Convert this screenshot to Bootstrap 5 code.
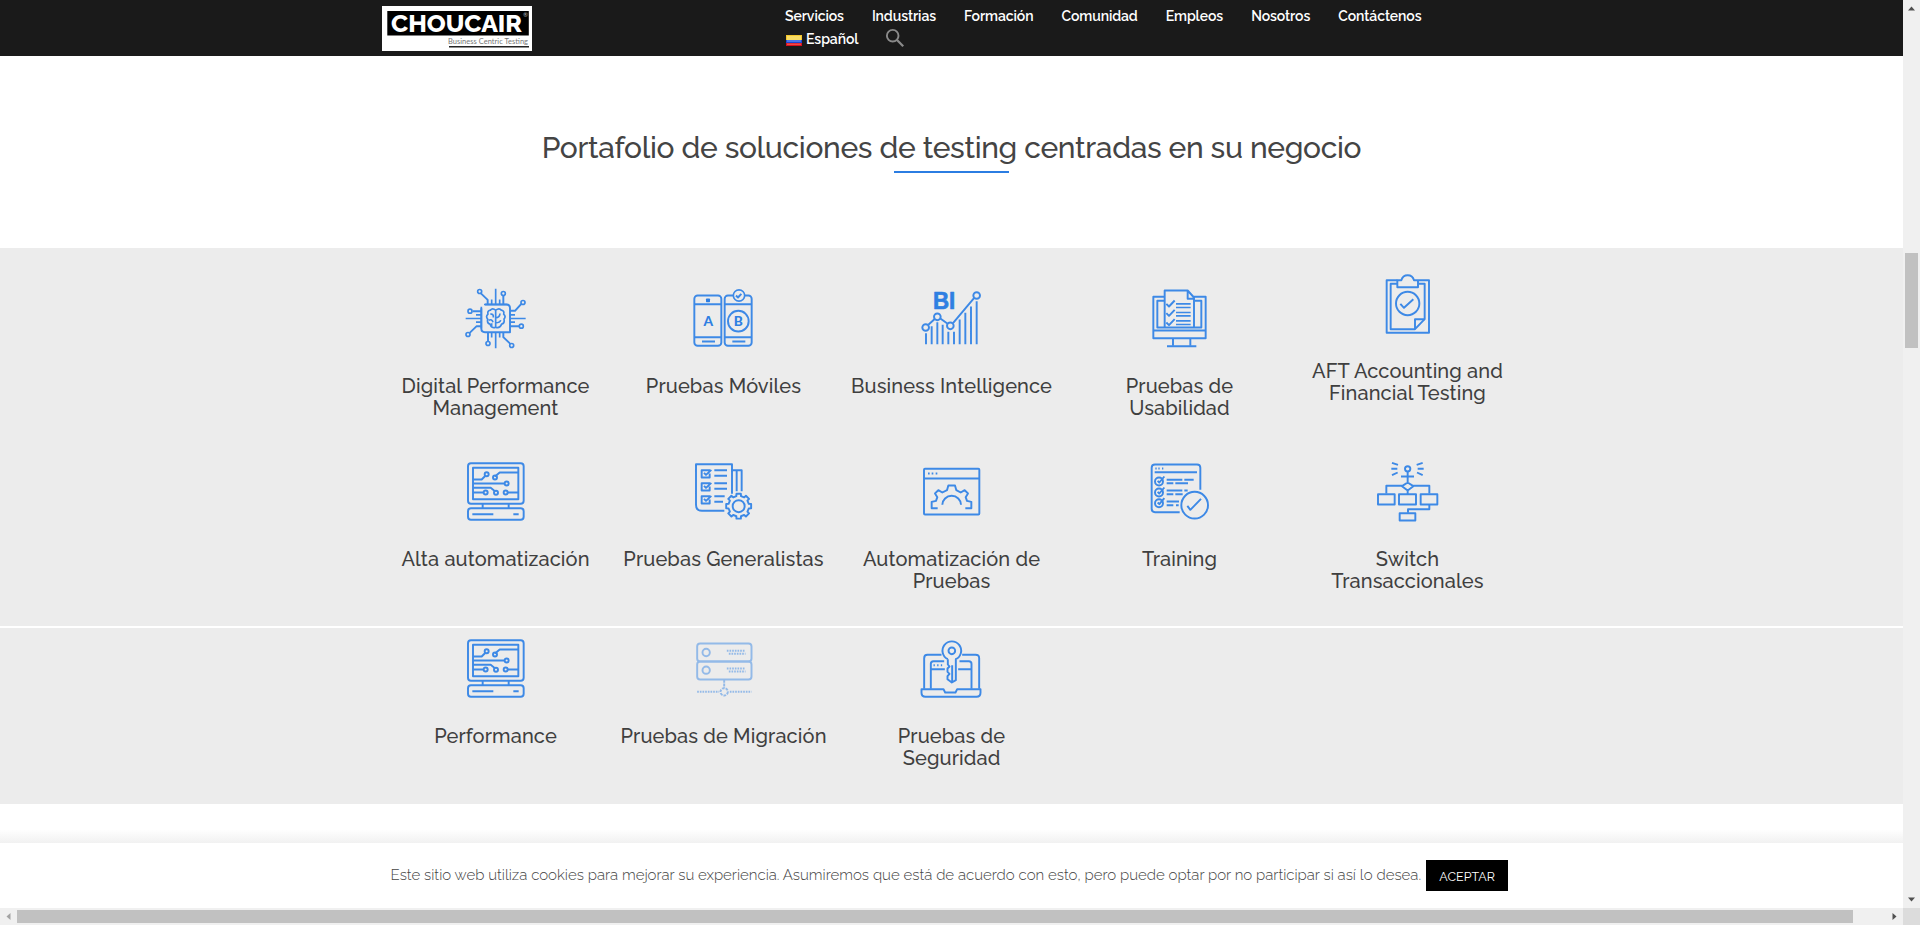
<!DOCTYPE html>
<html lang="es">
<head>
<meta charset="utf-8">
<meta name="viewport" content="width=device-width, initial-scale=1">
<title>Choucair Testing</title>
<link href="https://cdn.jsdelivr.net/npm/bootstrap@5.3.0/dist/css/bootstrap.min.css" rel="stylesheet">
<style>
body{font-family:Raleway,Lato,"Open Sans",sans-serif;color:#3f3f3f;height:925px;overflow:hidden;background:#fff}
.viewport-row{height:908px}
.site-head{height:56px;background:#1a1a1a}
.wrap{width:1140px}
.logo{width:150px;height:45px;margin:6px 0 0 .5px}
.site-nav{width:680px;margin-left:253px;padding-top:5px}
.site-nav a{color:#fff;font-size:14px;font-weight:600;line-height:23px;height:23px;white-space:nowrap;text-decoration:none;letter-spacing:-.085px}
.menu-line{column-gap:28px}
.title-block{height:192px;padding-top:73px}
.title-block h2{font-size:30px;font-weight:500;line-height:38px;margin:0;color:#444;white-space:nowrap;letter-spacing:-.325px}
.rule{width:115px;height:2px;background:#2b7de2;margin-top:4px}
.services{background:#ececec}
.band-a{height:378px;padding-top:39px}
.band-b{height:176px;padding-top:9px}
.divider{height:2px;background:#fff}
.svc-row{height:173px}
.svc{width:228px;text-align:center}
.svc svg{width:64px;height:64px;display:block;margin:0 auto 24px;fill:none;stroke:#3d89e6;stroke-width:5.8;stroke-linejoin:round;transform:translate(-.5px,-.5px)}
.svc h4{font-size:20px;font-weight:500;line-height:22px;margin:0;white-space:nowrap;letter-spacing:.12px}
.svc.raised{margin-top:-15px}
.svc .solid{fill:#2f7fe2;stroke:none}
.gap-strip{height:39px;background:linear-gradient(#fff 65%,#f1f1f1)}
.cookie{height:65px;background:#fff;padding-left:18px}
.cookie-text{font-size:15px;font-weight:300;color:#444;white-space:nowrap}
.accept{width:82px;height:31px;background:#000;color:#fff;font-size:12.5px;border-radius:0;margin-left:5px;padding:0;line-height:31px;text-align:center;white-space:nowrap}
.bar-v{width:17px;background:#f0f0f0}
.bar-v .thumb{width:13px;height:95px;background:#c1c1c1;margin-top:236px}
.bar-h{height:17px;background:#f0f0f0}
.bar-h .thumb{width:1836px;height:13px;background:#c1c1c1}
.bar-end{width:17px;height:17px;flex:none}
.corner{width:17px;height:17px;background:#dcdcdc}
</style>
</head>
<body>
<div class="d-flex viewport-row">
<main class="flex-grow-1">
  <header class="site-head">
    <div class="wrap mx-auto d-flex">
      <svg class="logo flex-shrink-0" viewBox="0 0 150 45">
        <rect width="150" height="45" fill="#fff"/><rect x="5.3" y="5" width="141.500" height="24.500"/>
        <text x="9" y="26" font-family="Raleway" font-weight="800" font-size="24" fill="#fff" textLength="131" lengthAdjust="spacingAndGlyphs">CHOUCAIR</text>
        <text x="141" y="11" font-family="Lato" font-size="6" fill="#bbb">®</text>
        <text x="66" y="37.500" font-family="Lato" font-size="7.500" fill="#777" textLength="80" lengthAdjust="spacing">Business Centric Testing</text>
        <path d="M67 40.800H147" stroke="#222" stroke-width="1.500"/>
      </svg>
      <nav class="site-nav">
        <div class="d-flex menu-line">
          <a href="#">Servicios</a><a href="#">Industrias</a><a href="#">Formación</a><a href="#">Comunidad</a><a href="#">Empleos</a><a href="#">Nosotros</a><a href="#">Contáctenos</a>
        </div>
        <div class="d-flex">
          <a href="#" class="d-flex"><svg width="16" height="11" style="margin:7px 4px 0 1px" viewBox="0 0 16 11"><rect width="16" height="11" fill="#f3c52b"/><rect y="1" x="1" width="14" height="4" fill="#f8dc65"/><rect y="5" width="16" height="3" fill="#1e47d0"/><rect y="5" x="1" width="14" height="2" fill="#4b73e8"/><rect y="8" width="16" height="3" fill="#d8101c"/><rect y="8.500" x="1" width="14" height="1.500" fill="#f04a4a"/></svg>Español</a>
          <svg width="20" height="20" viewBox="0 0 20 20" fill="none" stroke="#8a8a8a" stroke-width="1.900" style="margin-left:27px"><circle cx="7.700" cy="7.700" r="5.800"/><path d="M12 12l6.200 6.200" stroke-width="2.300"/></svg>
        </div>
      </nav>
    </div>
  </header>

  <section class="title-block text-center">
    <h2>Portafolio de soluciones de testing centradas en su negocio</h2>
    <div class="rule mx-auto"></div>
  </section>

  <section class="services">
    <div class="band-a">
      <div class="wrap mx-auto d-flex svc-row">
        <div class="svc">
          <svg viewBox="250.5 51 192 192">
            <path d="M315 105H379Q390 105 390 116V188H315Q304 188 304 177V116"/><path d="M304 112V177M312 105h70M347 58v47M347 188v48M257 147h47M390 147h47M335 90v15M359 90v15M335 188v16M359 188v16M288 136h16M288 158h16M390 136h15M390 158h15" stroke-width="5"/>
            <path d="M302 71l21 20v14M370 79v26M424 103l-19 21h-15M304 125h-26M304 170h-14l-21 20M390 170h28M324 188v28M370 188v15l21 20"/>
            <g stroke-width="5"><circle cx="299" cy="66" r="6"/><circle cx="370" cy="72" r="6"/><circle cx="429" cy="99" r="6"/><circle cx="270" cy="125" r="6"/><circle cx="264" cy="195" r="6"/><circle cx="424" cy="170" r="6"/><circle cx="324" cy="222" r="6"/><circle cx="395" cy="228" r="6"/></g>
            <path d="M347 122q-10-8-16 0-10 2-7 12-8 7-1 15-3 12 7 15 5 14 17 9V122q11-8 17 0 10 2 7 12 8 7 1 15 3 12-7 15-6 14-18 9M331 134q10-2 9 10M326 152q10-4 13 6M347 145q12-1 13-13M347 160q13 0 15-8M335 170v-9" stroke-width="5"/>
          </svg>
          <h4>Digital Performance<br>Management</h4>
        </div>
        <div class="svc">
          <svg viewBox="934.5 51 192 192">
            <rect x="943" y="78" width="81" height="151" rx="10"/><rect x="1034" y="78" width="81" height="151" rx="10"/><path d="M943 104h81M1034 104h81M943 203h81M1034 203h81M966 216h39M1057 216h39"/>
            <circle cx="1077" cy="78" r="17" fill="#ececec" stroke-width="5"/><path d="M1068 78l6 6 10-11"/><circle cx="1075" cy="155" r="31"/>
            <rect x="978" y="87" width="12" height="11" rx="2" class="solid"/>
            <text x="985" y="169" text-anchor="middle" font-family="Lato" font-weight="900" font-size="41" class="solid">A</text><text x="1075" y="169" text-anchor="middle" font-family="Lato" font-weight="900" font-size="41" class="solid">B</text>
          </svg>
          <h4>Pruebas Móviles</h4>
        </div>
        <div class="svc">
          <svg viewBox="238.5 51 192 192">
            <path d="M258 191v33M275 170v54M292 158v66M308 166v58M325 187v37M342 187v37M359 150v74M376 130v94M393 111v113M410 95v129"/><path d="M265 166l20-18M301 147l22 16M339 161l63-75"/>
            <circle cx="257" cy="174" r="10"/><circle cx="292" cy="142" r="10"/><circle cx="331" cy="169" r="10"/><circle cx="410" cy="78" r="10"/>
            <text x="279" y="119" font-family="Liberation Sans" font-weight="700" font-size="70" textLength="67" lengthAdjust="spacingAndGlyphs" fill="#2f7fe2" stroke="#2f7fe2" stroke-width="2">BI</text>
          </svg>
          <h4>Business Intelligence</h4>
        </div>
        <div class="svc">
          <svg viewBox="922.5 51 192 192">
            <path d="M974 82H940V206H1097V82H1062M940 183H1097M974 94H952V174H1084V94H1064M999 206v23M1051 206v23"/><path d="M981 230h88"/><path d="M974 174V63H1043L1062 84V174M1043 63V88H1062"/><path d="M979 103l8 8 17-18M979 131l8 8 17-18M979 159l8 8 17-18"/><path d="M1008 103h44M1008 114h44M1008 129h44M1008 139h44M1008 154h44M1008 165h44" stroke-width="5"/>
          </svg>
          <h4>Pruebas de<br>Usabilidad</h4>
        </div>
        <div class="svc raised">
          <svg viewBox="466.5 66 192 192">
            <path d="M532 92H500V250H627V92H595M532 103H512V239H585L614 209V103H595"/><path d="M585 239V209H614"/><path d="M532 92H544Q548 77 563 77T582 92H594V113H532Z"/><circle cx="563" cy="162" r="35"/><path d="M541 163l11 12 28-26"/>
          </svg>
          <h4>AFT Accounting and<br>Financial Testing</h4>
        </div>
      </div>

      <div class="wrap mx-auto d-flex">
        <div class="svc">
          <svg viewBox="250.5 30 192 192">
            <g id="circuit-pc"><rect x="264" y="41" width="167" height="122" rx="9"/><rect x="279" y="55" width="136" height="94"/><rect x="264" y="176" width="167" height="35" rx="9"/><path d="M308 163v13M386 163v13M277 194h63M400 194h16M279 90h26l12-12M279 102h94M279 115h53l13 10M279 129h32M345 81l14-12h56M383 129h32"/><circle cx="320" cy="74" r="6"/><circle cx="345" cy="84" r="6"/><circle cx="380" cy="102" r="6"/><circle cx="317" cy="129" r="6"/><circle cx="348" cy="130" r="6"/><circle cx="377" cy="129" r="6"/></g>
          </svg>
          <h4>Alta automatización</h4>
        </div>
        <div class="svc">
          <svg viewBox="934.5 30 192 192">
            <path d="M1033 184H966Q948 184 948 166V44H1056V133M1056 62H1085V125M1070 62V125"/><path d="M990 62H965V84H989V72M990 101H965V123H989V111M990 140H965V162H989V150M972 70l6 6 16-15M972 109l6 6 16-15M972 148l6 6 16-15"/><path d="M1003 62h38M1003 79h38M1003 101h38M1003 118h38M1003 140h31M1003 157h26"/>
            <g transform="translate(1076 170)"><path d="M30.2-7 37.4-6.6V6.6L30.2 7 26.3 16.4 31.1 21.8 21.8 31.1 16.4 26.3 7 30.2 6.6 37.4H-6.6L-7 30.2-16.4 26.3-21.8 31.1-31.1 21.8-26.3 16.4-30.2 7-37.4 6.6V-6.6L-30.2-7-26.3-16.4-31.1-21.8-21.8-31.1-16.4-26.3-7-30.2-6.6-37.4H6.6L7-30.2 16.4-26.3 21.8-31.1 31.1-21.8 26.3-16.4Z"/><circle r="18"/></g>
          </svg>
          <h4>Pruebas Generalistas</h4>
        </div>
        <div class="svc">
          <svg viewBox="238.5 30 192 192">
            <rect x="252" y="58" width="166" height="137" rx="3"/><path d="M252 87h166"/><path d="M264 72h5M275 72h5M287 72h5"/><path d="M293 176H275V157L288 154 292 143 285 132 295 122 307 129 321 122 325 108H345L349 122 362 129 374 122 384 132 377 143 381 154 394 157V176H376M307 166A28 27 0 0 1 363 166"/>
          </svg>
          <h4>Automatización de<br>Pruebas</h4>
        </div>
        <div class="svc">
          <svg viewBox="922.5 30 192 192">
            <path d="M1019 188H945Q935 188 935 178V55Q935 45 945 45H1071Q1081 45 1081 55V121M944 68h127M946 57h4M955 57h4M966 57h4"/><circle cx="957" cy="96" r="12"/><circle cx="957" cy="129" r="12"/><circle cx="957" cy="161" r="12"/><path d="M953 94l5 5 15-18M953 127l5 5 15-18M953 159l5 5 15-18"/><path d="M980 91h47M1033 91h28M980 101h20M1006 101h38M980 123h47M1033 123h10M980 134h20M1006 134h22M980 156h37M980 167h20M1008 167h8"/><circle cx="1064" cy="167" r="40"/><path d="M1042 169l9 12 32-33"/>
          </svg>
          <h4>Training</h4>
        </div>
        <div class="svc">
          <svg viewBox="466.5 30 192 192">
            <circle cx="563" cy="58" r="8"/><path d="M563 66v35M543 81h39M546 109H499V132M580 109H628V132M563 122v12M563 99L580 110 563 123 546 110ZM628 166V179H564V190M516 40l18 6M514 58h18M516 77l17-8M608 40l-18 6M611 58h-18M608 77l-17-8"/><rect x="474" y="134" width="50" height="31"/><rect x="537" y="134" width="51" height="31"/><rect x="602" y="134" width="50" height="31"/><rect x="539" y="191" width="47" height="22"/>
          </svg>
          <h4>Switch<br>Transaccionales</h4>
        </div>
      </div>
    </div>
    <div class="divider"></div>
    <div class="band-b">
      <div class="wrap mx-auto d-flex">
        <div class="svc">
          <svg viewBox="250.5 30 192 192"><use href="#circuit-pc"/></svg>
          <h4>Performance</h4>
        </div>
        <div class="svc">
          <svg viewBox="0 0 192 192" opacity=".5">
            <rect x="17" y="21" width="163" height="54" rx="9"/><rect x="17" y="75" width="163" height="54" rx="9"/><circle cx="44" cy="48" r="11"/><circle cx="44" cy="101" r="11"/><path d="M106 43h54M112 52h50M106 96h54M112 105h50M17 166h66M115 166h65" stroke-dasharray="5 3"/><path d="M98 130v24" stroke-dasharray="9 2"/><circle cx="98" cy="166" r="11" stroke-dasharray="8 3"/>
          </svg>
          <h4>Pruebas de Migración</h4>
        </div>
        <div class="svc">
          <svg viewBox="0 0 192 192">
            <path d="M66 55H24Q14 55 14 65V157M128 55H168Q179 55 179 65V157M34 157V82Q34 74 42 74H74M120 74H148Q156 74 156 82V157M34 98H76M116 98H156"/><path d="M42 86h4M53 86h4M64 86h4"/><path d="M6 158H72L77 168H108L113 158H183V169Q183 181 171 181H18Q6 181 6 169Z"/><path d="M85 68A28 28 0 1 1 109 68V131L97 138 84 128V119L90 112 84 106V96L90 90 85 84V68M98 86v48"/><circle cx="97" cy="43" r="10"/>
          </svg>
          <h4>Pruebas de<br>Seguridad</h4>
        </div>
      </div>
    </div>
  </section>
  <div class="gap-strip"></div>
  <div class="cookie"><div class="wrap mx-auto d-flex align-items-center h-100">
    <span class="cookie-text">Este sitio web utiliza cookies para mejorar su experiencia. Asumiremos que está de acuerdo con esto, pero puede optar por no participar si así lo desea.</span>
    <a class="btn accept" href="#">ACEPTAR</a>
  </div></div>
</main>
<aside class="bar-v d-flex flex-column align-items-center">
  <svg class="bar-end" viewBox="0 0 17 17"><path d="M5 10.500l3.500-4 3.500 4z" fill="#505050"/></svg>
  <div class="thumb"></div>
  <svg class="bar-end mt-auto" viewBox="0 0 17 17"><path d="M5 6.500h7l-3.500 4z" fill="#505050"/></svg>
</aside>
</div>
<div class="d-flex align-items-center bar-h">
  <svg class="bar-end" viewBox="0 0 17 17"><path d="M10.500 5v7l-4-3.500z" fill="#a3a3a3"/></svg>
  <div class="thumb"></div>
  <svg class="bar-end ms-auto" viewBox="0 0 17 17"><path d="M6.500 5v7l4-3.500z" fill="#505050"/></svg>
  <div class="corner"></div>
</div>
<script src="https://cdn.jsdelivr.net/npm/bootstrap@5.3.0/dist/js/bootstrap.bundle.min.js"></script>
</body>
</html>
